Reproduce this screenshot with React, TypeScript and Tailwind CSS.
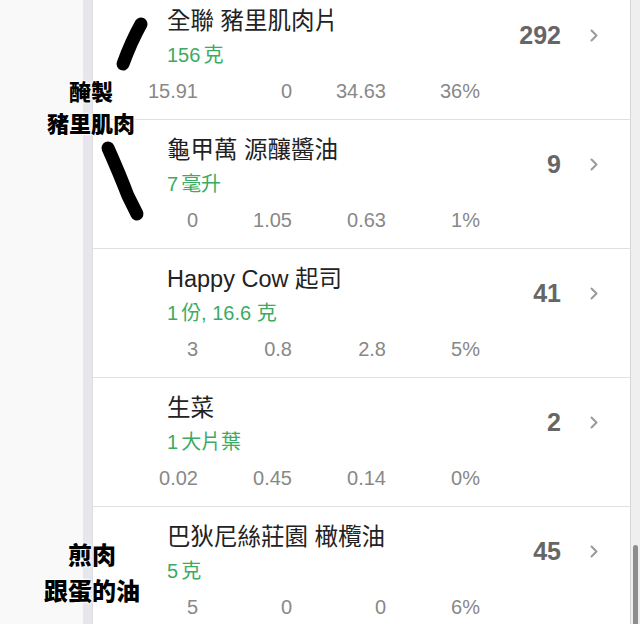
import React from "react";

type Row = {
  title: string;
  amount: string;
  nums: [string, string, string, string];
  cal: string;
};

const rows: Row[] = [
  { title: "全聯 豬里肌肉片", amount: "156克", nums: ["15.91", "0", "34.63", "36%"], cal: "292" },
  { title: "龜甲萬 源釀醬油", amount: "7毫升", nums: ["0", "1.05", "0.63", "1%"], cal: "9" },
  { title: "Happy Cow 起司", amount: "1份, 16.6 克", nums: ["3", "0.8", "2.8", "5%"], cal: "41" },
  { title: "生菜", amount: "1大片葉", nums: ["0.02", "0.45", "0.14", "0%"], cal: "2" },
  { title: "巴狄尼絲莊園 橄欖油", amount: "5克", nums: ["5", "0", "0", "6%"], cal: "45" },
];

const font = { fontFamily: '"Liberation Sans", "Noto Sans CJK TC", sans-serif' };

function Amount({ text }: { text: string }) {
  const m = text.match(/^(\d+)([^\d,].*)$/);
  if (m) {
    return (
      <>
        <span>{m[1]}</span>
        <span className="ml-[3px]">{m[2]}</span>
      </>
    );
  }
  return <>{text}</>;
}

function Chevron() {
  return (
    <svg width="8" height="13" viewBox="0 0 8 13" className="ml-[29px] mt-[1px]">
      <path d="M1.5 1.5 L6.5 6.5 L1.5 11.5" fill="none" stroke="#9a9a9a" strokeWidth="2" strokeLinecap="round" strokeLinejoin="round" />
    </svg>
  );
}

function FoodRow({ r, first }: { r: Row; first?: boolean }) {
  return (
    <div className={`flex h-[129px] border-b border-[#e0e0e0] pl-[11px] ${first ? "-mt-[9px]" : ""}`}>
      <div className="flex flex-col">
        <div className="pl-[63px] pt-[16px] text-[23.5px] leading-[28px] text-[#222]">{r.title}</div>
        <div className="pl-[63px] mt-[8px] text-[20px] leading-[24px] text-[#3aab63]">
          <Amount text={r.amount} />
        </div>
        <div className="mt-[12px] flex text-[20px] leading-[24px] text-[#888]">
          {r.nums.map((n, i) => (
            <div key={i} className="w-[94px] text-right">{n}</div>
          ))}
        </div>
      </div>
      <div className="ml-auto mr-[32px] flex items-center self-start pt-[29px]">
        <div className="text-[25px] leading-[30px] font-bold text-[#666]">{r.cal}</div>
        <Chevron />
      </div>
    </div>
  );
}

const shadow = {
  fontFamily: '"Noto Sans CJK TC", sans-serif',
  textShadow: "0 0 3px #fff, 0 0 3px #fff, 0 0 2px #fff, 0 0 1px #fff",
};

export default function App() {
  return (
    <div className="relative flex h-[624px] w-[640px] overflow-hidden bg-[#f9f9f9]" style={font}>
      <div className="w-[83px]" />
      <div className="w-[10px] bg-[#e6e6ec] border-r border-[#dcdce2]" />
      <div className="flex-1 bg-white">
        {rows.map((r, i) => (
          <FoodRow key={i} r={r} first={i === 0} />
        ))}
      </div>
      <div className="relative w-[10px] border-l border-[#d6d6d6] bg-[#efefef]">
        <div className="absolute left-[2px] top-[545px] h-[90px] w-[5px] rounded-full bg-[#8d8d8d]" />
      </div>

      <svg className="absolute left-0 top-0" width="640" height="624" viewBox="0 0 640 624">
        <path d="M141 24 Q131 42 123 64" fill="none" stroke="#000" strokeWidth="13" strokeLinecap="round" />
        <path d="M108 148 Q120 175 128 196 Q133 206 137 214" fill="none" stroke="#000" strokeWidth="13" strokeLinecap="round" />
      </svg>

      <div
        className="absolute left-[44px] top-[74px] w-[94px] text-center text-[22px] font-black leading-[32px] text-black"
        style={shadow}
      >
        <div>醃製</div>
        <div>豬里肌肉</div>
      </div>
      <div
        className="absolute left-[42px] top-[536px] w-[100px] text-center text-[24px] font-black leading-[36px] text-black"
        style={shadow}
      >
        <div>煎肉</div>
        <div>跟蛋的油</div>
      </div>
    </div>
  );
}
